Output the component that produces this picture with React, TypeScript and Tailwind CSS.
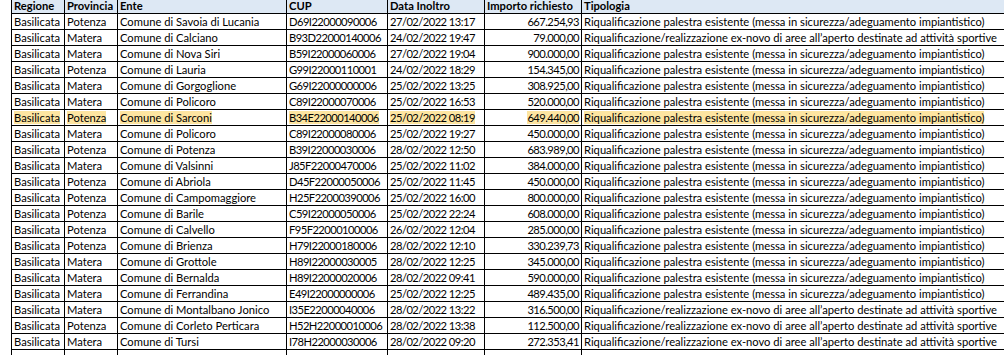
import React from 'react'

const P = 'Riqualificazione palestra esistente (messa in sicurezza/adeguamento impiantistico)'
const R = 'Riqualificazione/realizzazione ex-novo di aree all’aperto destinate ad attività sportive'

type Row = [string, string, string, string, string, string, boolean?]

const rows: Row[] = [
	['Potenza', 'Savoia di Lucania', 'D69I22000090006', '27/02/2022 13:17', '667.254,93', P],
	['Matera', 'Calciano', 'B93D22000140006', '24/02/2022 19:47', '79.000,00', R],
	['Matera', 'Nova Siri', 'B59I22000060006', '27/02/2022 19:04', '900.000,00', P],
	['Potenza', 'Lauria', 'G99I22000110001', '24/02/2022 18:29', '154.345,00', P],
	['Matera', 'Gorgoglione', 'G69I22000000006', '25/02/2022 13:25', '308.925,00', P],
	['Matera', 'Policoro', 'C89I22000070006', '25/02/2022 16:53', '520.000,00', P],
	['Potenza', 'Sarconi', 'B34E22000140006', '25/02/2022 08:19', '649.440,00', P, true],
	['Matera', 'Policoro', 'C89I22000080006', '25/02/2022 19:27', '450.000,00', P],
	['Potenza', 'Potenza', 'B39I22000030006', '28/02/2022 12:50', '683.989,00', P],
	['Matera', 'Valsinni', 'J85F22000470006', '25/02/2022 11:02', '384.000,00', P],
	['Potenza', 'Abriola', 'D45F22000050006', '25/02/2022 11:45', '450.000,00', P],
	['Potenza', 'Campomaggiore', 'H25F22000390006', '25/02/2022 16:00', '800.000,00', P],
	['Potenza', 'Barile', 'C59I22000050006', '25/02/2022 22:24', '608.000,00', P],
	['Potenza', 'Calvello', 'F95F22000100006', '26/02/2022 12:04', '285.000,00', P],
	['Potenza', 'Brienza', 'H79I22000180006', '28/02/2022 12:10', '330.239,73', P],
	['Matera', 'Grottole', 'H89I22000030005', '28/02/2022 12:25', '345.000,00', P],
	['Matera', 'Bernalda', 'H89I22000020006', '28/02/2022 09:41', '590.000,00', P],
	['Matera', 'Ferrandina', 'E49I22000000006', '25/02/2022 12:25', '489.435,00', P],
	['Matera', 'Montalbano Jonico', 'I35E22000040006', '28/02/2022 13:22', '316.500,00', R],
	['Potenza', 'Corleto Perticara', 'H52H22000010006', '28/02/2022 13:38', '112.500,00', R],
	['Matera', 'Tursi', 'I78H22000030006', '28/02/2022 09:20', '272.353,41', R],
]

const Hl = ({ on, children }: { on?: boolean; children: React.ReactNode }) =>
	on ? <span className="bg-[#fde5a1]">{children}</span> : <>{children}</>

const td = 'border border-black px-[2px] h-[16px] p-0 leading-[15px] whitespace-nowrap overflow-hidden'
const th = 'border border-black border-t-0 px-[2px] h-[13px] p-0 leading-[12px] whitespace-nowrap overflow-hidden text-left'
// numbers in Lato run wider than the sheet's font, so tighten them a bit
const num = 'tracking-[-0.55px]'

const App = () => {
	return (
		<div className="w-[1006px] h-[355px] overflow-hidden bg-white pl-[11px] font-['Lato','Liberation_Sans',sans-serif] text-[11.2px] text-black">
			<table className="table-fixed border-collapse w-[993px]">
				<colgroup>
					<col className="w-[53px]" />
					<col className="w-[53px]" />
					<col className="w-[169px]" />
					<col className="w-[101px]" />
					<col className="w-[97px]" />
					<col className="w-[97px]" />
					<col />
				</colgroup>
				<thead>
					<tr className="bg-[#dde8f4] font-bold">
						<th className={th}>Regione</th>
						<th className={th}>Provincia</th>
						<th className={th}>Ente</th>
						<th className={th}>CUP</th>
						<th className={th}>Data Inoltro</th>
						<th className={th}>Importo richiesto</th>
						<th className={`${th} border-r-0`}>Tipologia</th>
					</tr>
				</thead>
				<tbody>
					{rows.map((r, i) => (
						<tr key={i}>
							<td className={td}><Hl on={r[6]}>Basilicata</Hl></td>
							<td className={td}><Hl on={r[6]}>{r[0]}</Hl></td>
							<td className={td}><Hl on={r[6]}>Comune di {r[1]}</Hl></td>
							<td className={`${td} ${num}`}><Hl on={r[6]}>{r[2]}</Hl></td>
							<td className={`${td} ${num}`}><Hl on={r[6]}>{r[3]}</Hl></td>
							<td className={`${td} ${num} text-right`}><Hl on={r[6]}>{r[4]}</Hl></td>
							<td className={`${td} overflow-visible border-r-0`}><Hl on={r[6]}>{r[5]}</Hl></td>
						</tr>
					))}
					<tr>
						<td className="border-x border-black h-[8px]" />
						<td className="border-x border-black" />
						<td className="border-x border-black" />
						<td className="border-x border-black" />
						<td className="border-x border-black" />
						<td className="border-x border-black" />
						<td className="border-l border-black" />
					</tr>
				</tbody>
			</table>
		</div>
	)
}

export default App
